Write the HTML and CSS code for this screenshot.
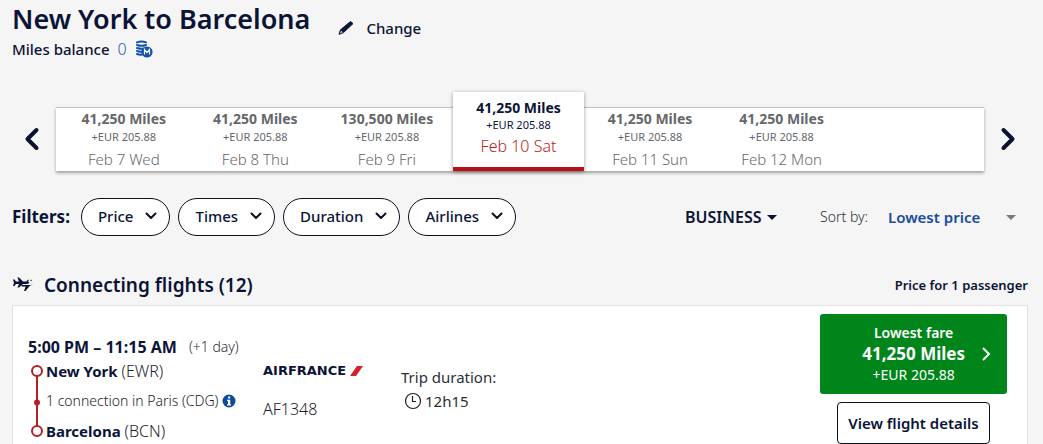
FILE: index.html
```html
<!DOCTYPE html>
<html lang="en">
<head>
<meta charset="utf-8">
<meta name="viewport" content="width=device-width, initial-scale=1">
<title>New York to Barcelona</title>
<link rel="stylesheet" href="styles.css">
</head>
<body>
<header class="trip">
  <div>
    <h1 class="trip-title">New York to Barcelona</h1>
    <p class="balance">Miles balance <span class="balance-value">0</span>
      <svg class="coins" viewBox="0 0 18 18" aria-hidden="true">
        <g fill="none" stroke="#1453ab" stroke-width="2" stroke-linecap="round">
          <path d="M2 2.400q4.500-1.600 9 0M2 5q4.500 1.600 9 0M2 8q4 1.400 7 .5M2 11q3 1 5 .5M2 14q3 1 5 .5"/>
        </g>
        <circle cx="12" cy="12" r="5.600" fill="#1453ab"/>
        <path d="M9.500 14.500v-5l2.500 3 2.500-3v5" fill="none" stroke="#f4f5f5" stroke-width="1.200"/>
      </svg>
    </p>
  </div>
  <a class="change" href="#">
    <svg class="pencil" viewBox="0 0 16 16" aria-hidden="true"><path d="M12.500 1.500 15 3.600 5.500 12.600 1 14.300 2.500 9.800z" fill="#0b1437" stroke="#0b1437" stroke-linejoin="round"/><path d="M3.100 10.800 4.800 12.200 2 13.200z" fill="#f4f5f5"/></svg>
    Change
  </a>
</header>

<section class="carousel" aria-label="Departure dates">
  <button class="arrow" type="button" aria-label="Earlier dates"><svg viewBox="0 0 16 24" aria-hidden="true"><path d="M12.500 3 3.500 12l9 9"/></svg></button>
  <div class="dates">
    <button class="date" type="button"><b>41,250 Miles</b><small>+EUR 205.88</small><span>Feb 7 Wed</span></button>
    <button class="date" type="button"><b>41,250 Miles</b><small>+EUR 205.88</small><span>Feb 8 Thu</span></button>
    <button class="date" type="button"><b>130,500 Miles</b><small>+EUR 205.88</small><span>Feb 9 Fri</span></button>
    <button class="date date-selected" type="button" aria-pressed="true"><b>41,250 Miles</b><small>+EUR 205.88</small><span>Feb 10 Sat</span></button>
    <button class="date" type="button"><b>41,250 Miles</b><small>+EUR 205.88</small><span>Feb 11 Sun</span></button>
    <button class="date" type="button"><b>41,250 Miles</b><small>+EUR 205.88</small><span>Feb 12 Mon</span></button>
  </div>
  <button class="arrow" type="button" aria-label="Later dates"><svg viewBox="0 0 16 24" aria-hidden="true"><path d="m3.500 3 9 9-9 9"/></svg></button>
</section>

<section class="toolbar">
  <h2 class="toolbar-title">Filters:</h2>
  <div class="pills">
    <button class="pill" type="button">Price <svg viewBox="0 0 12 8" aria-hidden="true"><path d="m1.500 1.500 4.500 4.500 4.500-4.500"/></svg></button>
    <button class="pill" type="button">Times <svg viewBox="0 0 12 8" aria-hidden="true"><path d="m1.500 1.500 4.500 4.500 4.500-4.500"/></svg></button>
    <button class="pill" type="button">Duration <svg viewBox="0 0 12 8" aria-hidden="true"><path d="m1.500 1.500 4.500 4.500 4.500-4.500"/></svg></button>
    <button class="pill" type="button">Airlines <svg viewBox="0 0 12 8" aria-hidden="true"><path d="m1.500 1.500 4.500 4.500 4.500-4.500"/></svg></button>
  </div>
  <div class="picker cabin">
    <select class="cabin-select" aria-label="Cabin"><option>BUSINESS</option></select>
    <svg class="caret" viewBox="0 0 10 5" aria-hidden="true"><path d="M0 0h10L5 5z"/></svg>
  </div>
  <label class="sort-label" for="sort">Sort by:</label>
  <div class="picker sort">
    <select class="sort-select" id="sort"><option>Lowest price</option></select>
    <svg class="caret caret-muted" viewBox="0 0 10 5" aria-hidden="true"><path d="M0 0h10L5 5z"/></svg>
  </div>
</section>

<main>
  <div class="results-head">
    <svg class="planes" viewBox="0 0 22 18" aria-hidden="true">
      <g fill="#0b1437">
        <path d="M1 3.500h1.500L4 5.600h3L5.400 1.500H7l4 4.100h4q2 .2 2.500 1.200-.5 1-2.500 1.200h-4L7 11.500H5.400L7 8H4l-1.500 2H1l1-3.200z"/>
        <path d="M9.500 9h9q2-.1 2.300-1.400L19 9.500h-1L13.500 15H12l1.600-4.500h-4zM14 5.500l2-1.800h1L16 6zM18 4.600l2-1.100-.7 1.700z"/>
      </g>
    </svg>
    <h2 class="results-title">Connecting flights (12)</h2>
    <p class="results-note">Price for 1 passenger</p>
  </div>

  <article class="flight">
    <div class="route">
      <p class="times"><strong>5:00 PM – 11:15 AM</strong> <span class="plus-day">(+1 day)</span></p>
      <div class="stops">
        <svg class="line" viewBox="0 0 14 74" aria-hidden="true">
          <g fill="none" stroke="#b61f23" stroke-width="2"><path d="M7 12v50"/><circle cx="7" cy="7" r="5"/><circle cx="7" cy="67" r="5"/></g>
          <circle cx="7" cy="38.500" r="3" fill="#b61f23"/>
        </svg>
        <ul class="stop-list">
          <li class="stop"><strong>New York</strong> <span class="code">(EWR)</span></li>
          <li class="stop stop-via">1 connection in Paris (CDG)
            <button class="info" type="button" aria-label="Connection details"><svg viewBox="0 0 14 14" aria-hidden="true"><circle cx="7" cy="7" r="6.500" fill="#0e4a9b"/><path d="M6 2.500h2.200v2H6zM5 5.800h3.200v4.400H9v1.300H5v-1.300h1V7.100H5z" fill="#fff"/></svg></button>
          </li>
          <li class="stop"><strong>Barcelona</strong> <span class="code">(BCN)</span></li>
        </ul>
      </div>
    </div>
    <div class="carrier">
      <p class="logo">AIRFRANCE<svg viewBox="0 0 13 10" aria-hidden="true"><path d="M7 0h6L6 10H0z" fill="#d9202a"/></svg></p>
      <p class="flight-no">AF1348</p>
    </div>
    <div class="duration">
      <p>Trip duration:</p>
      <p class="clock-row"><svg viewBox="0 0 18 18" aria-hidden="true"><circle cx="9" cy="9" r="7.500"/><path d="M8.500 4v5.500H12"/></svg>12h15</p>
    </div>
    <div class="actions">
      <button class="fare" type="button">
        <span class="fare-text"><span class="fare-tag">Lowest fare</span><b class="fare-miles">41,250 Miles</b><span>+EUR 205.88</span></span>
        <svg viewBox="0 0 10 16" aria-hidden="true"><path d="m2 2 6 6-6 6"/></svg>
      </button>
      <button class="details" type="button">View flight details</button>
    </div>
  </article>
</main>
</body>
</html>
```

FILE: styles.css
```css
* {
  box-sizing: border-box;
}

body {
  margin: 0;
  padding: 3px 15px 0 12px;
  background: #f5f5f5;
  color: #0b1437;
  font: 15px/20px "Noto Sans", "Open Sans", sans-serif;
  overflow-x: hidden;
}

h1, h2, p, ul {
  margin: 0;
  padding: 0;
}

button, select {
  font: inherit;
  color: inherit;
  background: none;
  border: 0;
  padding: 0;
  cursor: pointer;
}

strong, b {
  font-weight: 700;
}

.trip {
  display: flex;
  gap: 28px;
}

.trip-title {
  font-size: 27px;
  line-height: 32px;
  font-weight: 600;
}

.balance {
  display: flex;
  align-items: center;
  gap: 8px;
  margin-top: 4px;
  font-weight: 500;
}

.balance-value {
  color: #2b5fb0;
  font-size: 16px;
  font-weight: 300;
}

.coins {
  width: 18px;
  height: 18px;
}

.change {
  display: flex;
  align-items: center;
  gap: 12px;
  height: 50px;
  color: inherit;
  font-weight: 500;
  text-decoration: none;
}

.pencil {
  width: 16px;
  height: 16px;
}

.carousel {
  display: flex;
  align-items: center;
  gap: 16px;
  margin: 48px 0 27px;
  padding: 0 12px;
}

.arrow {
  flex: none;
  display: flex;
}

.arrow svg {
  width: 16px;
  height: 24px;
  fill: none;
  stroke: #0b1030;
  stroke-width: 4;
  stroke-linecap: round;
  stroke-linejoin: round;
}

.dates {
  flex: 1;
  display: grid;
  grid-template-columns: repeat(7, 1fr);
  height: 64px;
  padding: 0 5px 0 2px;
  background: #fff;
  border-top: 1px solid #c3c5c6;
  box-shadow: 0 2px 3px #00000059;
}

.date {
  display: flex;
  flex-direction: column;
  align-items: center;
  padding-top: 1px;
  color: #65686b;
  font-weight: 300;
}

.date b {
  font-size: 14px;
}

.date small {
  font-size: 11px;
  line-height: 16px;
  font-weight: 400;
}

.date span {
  margin-top: 4px;
}

.date-selected {
  height: 79px;
  margin-top: -16px;
  padding-top: 6px;
  background: #fff;
  color: #0b1437;
  border-bottom: 4px solid #b80f14;
  box-shadow: 0 1px 4px #00000066;
}

.date-selected small {
  line-height: 14px;
}

.date-selected span {
  color: #b61f23;
  font-size: 16px;
}

.toolbar {
  display: flex;
  align-items: center;
}

.toolbar-title {
  font-size: 17px;
  font-weight: 700;
}

.pills {
  display: flex;
  gap: 8px;
  margin-left: 11px;
}

.pill {
  display: flex;
  align-items: center;
  gap: 12px;
  height: 38px;
  padding: 0 12px 2px 16px;
  background: #fff;
  border: 1px solid #0b1020;
  border-radius: 19px;
  font-weight: 500;
}

.pill svg {
  width: 12px;
  height: 8px;
  fill: none;
  stroke: #0b1020;
  stroke-width: 2;
  stroke-linecap: round;
  stroke-linejoin: round;
}

.picker {
  display: flex;
  align-items: center;
}

.picker select {
  appearance: none;
}

.cabin {
  gap: 5px;
  margin-left: auto;
}

.cabin-select {
  font-size: 16px;
  font-weight: 600;
}

.caret {
  width: 10px;
  height: 5px;
  fill: #0b1437;
}

.caret-muted {
  fill: #77797b;
}

.sort-label {
  margin: 0 20px 0 43px;
  color: #2c2f35;
  font-size: 14px;
  font-weight: 300;
}

.sort {
  gap: 25px;
  margin-right: 12px;
}

.sort-select {
  color: #1a4b9e;
  font-weight: 600;
}

.results-head {
  display: flex;
  align-items: center;
  margin: 37px 0 8px;
  line-height: 24px;
}

.planes {
  width: 22px;
  height: 18px;
  margin-right: 10px;
}

.results-title {
  font-size: 19px;
  font-weight: 600;
}

.results-note {
  margin-left: auto;
  font-size: 13px;
  font-weight: 600;
}

.flight {
  display: grid;
  grid-template-columns: 235px 138px 1fr 187px;
  padding: 8px 20px 16px 15px;
  background: #fff;
  border: 1px solid #e0e2e3;
}

.route {
  padding-top: 21px;
}

.times {
  display: flex;
  gap: 12px;
  font-size: 16px;
  line-height: 24px;
  white-space: nowrap;
}

.plus-day {
  color: #2c2f35;
  font-size: 14px;
  font-weight: 300;
}

.stops {
  display: flex;
  gap: 2px;
}

.line {
  flex: none;
  width: 14px;
  height: 74px;
  margin: 5px 0 0 2px;
}

.stop-list {
  list-style: none;
  white-space: nowrap;
}

.stop {
  line-height: 24px;
}

.code {
  color: #1b1e28;
  font-size: 16px;
  font-weight: 300;
}

.stop-via {
  display: flex;
  align-items: center;
  gap: 4px;
  height: 36px;
  color: #1b1e28;
  font-size: 14px;
  font-weight: 300;
}

.info {
  display: flex;
}

.info svg {
  width: 14px;
  height: 14px;
}

.carrier {
  padding-top: 47px;
}

.logo {
  display: flex;
  align-items: center;
  gap: 4px;
  font: 700 13px/20px "DejaVu Sans", sans-serif;
}

.logo svg {
  width: 13px;
  height: 10px;
}

.flight-no {
  margin-top: 18px;
  color: #1b1e28;
  font-size: 16px;
  font-weight: 300;
}

.duration {
  padding-top: 51px;
  color: #2c2f35;
  line-height: 24px;
}

.clock-row {
  display: flex;
  align-items: center;
  gap: 3px;
  padding-left: 3px;
}

.clock-row svg {
  width: 18px;
  height: 18px;
  fill: none;
  stroke: #1b1e28;
  stroke-width: 1.2;
}

.actions {
  display: flex;
  flex-direction: column;
  align-items: center;
  gap: 8px;
}

.fare {
  display: flex;
  align-items: center;
  justify-content: flex-end;
  gap: 16px;
  width: 100%;
  height: 80px;
  padding-right: 16px;
  background: #00851a;
  color: #fff;
  border-radius: 3px;
  font-size: 14px;
}

.fare-text {
  display: flex;
  flex-direction: column;
  align-items: center;
}

.fare-tag {
  font-size: 14px;
  font-weight: 600;
}

.fare-miles {
  font-size: 17px;
  line-height: 22px;
}

.fare svg {
  width: 10px;
  height: 16px;
  fill: none;
  stroke: #fff;
  stroke-width: 2;
}

.details {
  height: 42px;
  padding: 0 10px;
  background: #fff;
  border: 1px solid #0b1020;
  border-radius: 4px;
  font-weight: 600;
  white-space: nowrap;
}
```
